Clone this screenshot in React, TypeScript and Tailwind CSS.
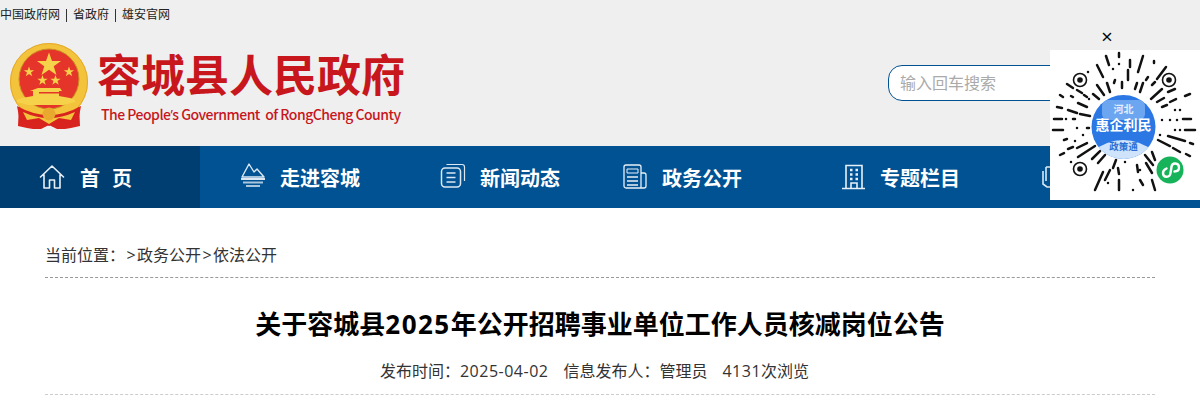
const navItems = [
  { label: '走进容城', width: 'w-[200px]', icon: 'mountain' },
  { label: '新闻动态', width: 'w-[182px]', icon: 'docs' },
  { label: '政务公开', width: 'w-[220px]', icon: 'news' },
  { label: '专题栏目', width: 'w-[200px]', icon: 'building' },
]

// sunburst strokes of the mini program code, x1 y1 x2 y2 in a 150 box
const qrRays = [
  [69, 3, 69, 7], [56, 6, 59, 15], [80, 10, 80, 17], [93, 6, 88, 22], [104, 11, 104, 13], [47, 15, 53, 27],
  [116, 17, 107, 29], [69, 14, 69, 14], [63, 19, 63, 19], [78, 20, 78, 30], [65, 30, 64, 33], [72, 32, 72, 38],
  [98, 27, 96, 30], [93, 33, 90, 42], [87, 33, 85, 39], [102, 35, 105, 32], [112, 39, 101, 49], [57, 33, 60, 42],
  [47, 35, 54, 45], [43, 44, 49, 49], [38, 22, 38, 22], [17, 34, 23, 38], [27, 40, 32, 43], [34, 45, 37, 47],
  [39, 49, 39, 49], [21, 46, 23, 47], [28, 53, 37, 57], [10, 45, 13, 47], [7, 57, 12, 58], [18, 60, 27, 63],
  [30, 64, 40, 66], [4, 69, 12, 69], [16, 69, 16, 69], [23, 69, 25, 69], [3, 80, 13, 80], [27, 78, 27, 78],
  [37, 78, 39, 78], [14, 90, 17, 89], [25, 91, 25, 91], [33, 85, 33, 85], [10, 105, 14, 103], [18, 99, 23, 97],
  [27, 98, 37, 93], [28, 107, 45, 96], [42, 109, 50, 101], [48, 113, 55, 105], [21, 112, 21, 112], [60, 120, 55, 130],
  [66, 110, 63, 118], [75, 112, 75, 112], [53, 122, 45, 140], [68, 118, 69, 124], [69, 130, 69, 140], [58, 133, 58, 133],
  [87, 115, 88, 122], [96, 113, 102, 123], [95, 105, 103, 115], [102, 102, 105, 110], [90, 130, 93, 135], [102, 130, 105, 140],
  [118, 86, 135, 91], [140, 93, 143, 94], [108, 90, 120, 96], [123, 98, 130, 102], [136, 104, 140, 106], [112, 70, 112, 70],
  [120, 70, 120, 70], [127, 70, 127, 70], [133, 69, 141, 69], [125, 80, 125, 80], [130, 80, 130, 80], [135, 80, 145, 80],
  [110, 85, 110, 85], [135, 46, 140, 44], [120, 52, 126, 49], [107, 52, 114, 48], [118, 42, 125, 39], [112, 57, 117, 55],
  [125, 60, 125, 60], [130, 60, 130, 60], [83, 140, 83, 140], [90, 120, 90, 120],
]

const qrEyes = [
  [30, 30],
  [119, 30],
  [30, 119],
]

function NavIcon({ name }: { name: string }) {
  if (name === 'home') {
    return (
      <svg viewBox="0 0 26 26" className="w-[26px] h-[26px]" fill="none" stroke="#e8f0f7" strokeWidth="1.6">
        <path d="M1.5 13 13 2l11.500 11M5 10.500V24h5.500v-8h5v8H21V10.500" strokeLinejoin="round" strokeLinecap="round" />
      </svg>
    )
  }
  if (name === 'mountain') {
    return (
      <svg viewBox="0 0 26 26" className="w-[26px] h-[26px] mb-[4px]" fill="none" stroke="#dbe8f3" strokeWidth="1.4">
        <path d="M2 15 9 2l5 8 3-3 7 8z" strokeLinejoin="round" />
        <path d="M1 17h24" strokeWidth="2" />
        <path d="M3 20.500h20M6 24h14" strokeWidth="2" stroke="#a9c6de" />
      </svg>
    )
  }
  if (name === 'docs') {
    return (
      <svg viewBox="0 0 26 26" className="w-[26px] h-[26px] mb-[2px]" fill="none" stroke="#dbe8f3" strokeWidth="1.5">
        <rect x="1.500" y="5" width="19" height="19" rx="3.500" />
        <path d="M6.500 1.500H22a2.500 2.500 0 0 1 2.500 2.500v14" strokeWidth="1.2" />
        <path d="M6.500 10h9M6.500 14.500h9M6.500 19h9" />
      </svg>
    )
  }
  if (name === 'news') {
    return (
      <svg viewBox="0 0 24 26" className="w-[26px] h-[26px]" fill="none" stroke="#e8f0f7" strokeWidth="1.3">
        <path d="M18 24H3a2 2 0 0 1-2-2V3a2 2 0 0 1 2-2h13a2 2 0 0 1 2 2zM18 9h3a2 2 0 0 1 2 2v11a2 2 0 0 1-2 2h-3" />
        <path d="M4 5h11v4H4z" strokeWidth="1" />
        <path d="M4 13h11M4 17h11M4 21h11" />
      </svg>
    )
  }
  if (name === 'building') {
    return (
      <svg viewBox="0 0 24 26" className="w-[24px] h-[26px]" fill="none" stroke="#e8f0f7" strokeWidth="1.6">
        <path d="M4 24V1.500h16V24M0 24.500h23" />
        <path d="M8 6h2.500M13.500 6H16M8 10.500h2.500M13.500 10.500H16M8 15h2.500M13.500 15H16" strokeWidth="2.4" />
        <path d="M9 24v-5h6v5" />
      </svg>
    )
  }
  return (
    <svg viewBox="0 0 12 28" className="w-[12px] h-[28px]" fill="none" stroke="#dbe8f3" strokeWidth="1.6">
      <path d="M4 4h8M4 4v14M1 8v13l4 3h7" />
    </svg>
  )
}

function Emblem() {
  return (
    <svg viewBox="0 0 80 86" className="w-[80px] h-[86px] shrink-0">
      <g transform="translate(0 3)">
        <path d="M10 59 9 80l9 2 12 2 10-5 10 5 12-2 9-2-1-21-12 9-18 4-18-4z" fill="#d8231f" />
        <circle cx="40" cy="36" r="39" fill="#f4c33c" />
        <circle cx="40" cy="36" r="38.500" fill="none" stroke="#e3a92c" strokeWidth="1" />
        <circle cx="40" cy="33" r="30" fill="#e5352a" stroke="#c98f22" strokeWidth="1" />
        <path d="M40 6.500l3 8.500h9l-7.300 5.300 2.800 8.700-7.500-5.300-7.500 5.300 2.800-8.700L28 15h9z" fill="#f6d24a" />
        <path d="M20 20.500l1.300 3.700h3.900l-3.200 2.300 1.200 3.800-3.200-2.300-3.200 2.300 1.200-3.800-3.200-2.300h3.900z" fill="#f6d24a" />
        <path d="M60 20.500l1.300 3.700h3.900l-3.200 2.300 1.200 3.800-3.200-2.300-3.200 2.300 1.200-3.800-3.200-2.300h3.900z" fill="#f6d24a" />
        <path d="M33.500 29l1.300 3.700h3.900l-3.200 2.300 1.200 3.800-3.200-2.300-3.200 2.300 1.200-3.800-3.200-2.300h3.900z" fill="#f6d24a" />
        <path d="M46.500 29l1.300 3.700h3.900l-3.200 2.300 1.200 3.800-3.200-2.300-3.200 2.300 1.200-3.800-3.200-2.300h3.900z" fill="#f6d24a" />
        <path d="M29 42h22l2 3h-3v5l11 2 5 2v2l-11 3H19L8 56v-2l5-2 11-2v-5h-3z" fill="#f6d24a" />
        <path d="M30 46h20v1.500H30z" fill="#e5352a" />
        <path d="M8 60q32 18 64 0l-3 16-17-2-12 6-12-6-17 2z" fill="#d8231f" />
        <path d="M14 66q26 12 52 0l-4 8-12-2-10 6-10-6-12 2z" fill="#f4c33c" />
        <circle cx="40" cy="68" r="6.500" fill="#e9a92e" />
      </g>
    </svg>
  )
}

function MiniCode() {
  return (
    <svg viewBox="0 0 150 150" className="w-[150px] h-[150px]">
      <g stroke="#111" strokeWidth="2.500" strokeLinecap="round">
        {qrRays.map((r, i) => (
          <line key={i} x1={r[0]} y1={r[1]} x2={r[2]} y2={r[3] + 0.01} />
        ))}
      </g>
      {qrEyes.map((e, i) => (
        <g key={i}>
          <circle cx={e[0]} cy={e[1]} r="6.500" fill="none" stroke="#111" strokeWidth="1.600" />
          <circle cx={e[0]} cy={e[1]} r="2.800" fill="#111" />
        </g>
      ))}
      <defs>
        <clipPath id="badgeClip">
          <circle cx="73.500" cy="77" r="32" />
        </clipPath>
      </defs>
      <circle cx="73.500" cy="77" r="32" fill="#2b78e4" />
      <rect x="52" y="50" width="43" height="20" rx="6" fill="#6da6f0" />
      <path d="M40 103q33-26 67 0v10H40z" fill="#cfe4fa" clipPath="url(#badgeClip)" />
      <text x="73.500" y="63" textAnchor="middle" fontSize="10" fontWeight="700" fill="#e3eefc" fontFamily="'Noto Sans CJK SC', sans-serif">河北</text>
      <text x="73.500" y="80" textAnchor="middle" fontSize="14" fontWeight="700" fill="#fff" fontFamily="'Noto Sans CJK SC', sans-serif">惠企利民</text>
      <text x="73.500" y="100" textAnchor="middle" fontSize="9.500" fontWeight="700" fill="#2b6fd6" fontFamily="'Noto Sans CJK SC', sans-serif">政策通</text>
      <circle cx="120" cy="120" r="13.500" fill="#16b35a" />
      <path d="M113 123c0 5 7 5 7.500 0l1-6c.5-5 7.500-4.500 7.500.5 0 3-2.500 4-4.500 4M116.500 118.500c-2.500 1-3.500 2.500-3.500 4.500" fill="none" stroke="#fff" strokeWidth="2.400" strokeLinecap="round" />
    </svg>
  )
}

export default function App() {
  return (
    <div className="relative h-[400px] w-[1200px] overflow-hidden bg-white text-[#333] font-['Open_Sans','Noto_Sans_CJK_SC',sans-serif]">
      <header className="h-[146px] bg-[#efefef]">
        <div className="flex h-[30px] items-center text-[12px] text-[#222]">
          <a>中国政府网</a>
          <span className="mx-[6px] h-[13px] w-px bg-[#333]"></span>
          <a>省政府</a>
          <span className="mx-[6px] h-[13px] w-px bg-[#333]"></span>
          <a>雄安官网</a>
        </div>

        <div className="flex pl-[9px] pt-[13px]">
          <Emblem />
          <div className="ml-[8px] mt-[4px] font-['Noto_Sans_CJK_SC',sans-serif] text-[#c8161d]">
            <div className="h-[52px] text-[44px] leading-[52px] font-bold whitespace-nowrap">容城县人民政府</div>
            <div className="mt-[5px] pl-[4px] text-[14px] leading-[20px] font-medium tracking-[-0.5px] whitespace-pre">The People<span className="font-['Open_Sans']">’</span>s Government  of RongCheng County</div>
          </div>
          <input
            placeholder="输入回车搜索"
            className="ml-[483px] mt-[22px] h-[36px] w-[200px] shrink-0 rounded-l-[14px] border border-[#005293] bg-white pl-[11px] text-[16px] outline-none placeholder:text-[#aaa]"
          />
        </div>
      </header>

      <nav className="flex h-[62px] bg-[#005293] text-[20px] font-bold text-white font-['Noto_Sans_CJK_SC',sans-serif]">
        <div className="flex w-[200px] shrink-0 items-center bg-[#003d70] pl-[39px]">
          <NavIcon name="home" />
          <span className="ml-[15px] mt-[2px] flex gap-[12px]">
            <span>首</span>
            <span>页</span>
          </span>
        </div>
        {navItems.map((item) => (
          <div key={item.label} className={`flex shrink-0 items-center pl-[40px] ${item.width}`}>
            <NavIcon name={item.icon} />
            <span className="ml-[14px] mt-[2px]">{item.label}</span>
          </div>
        ))}
        <div className="flex shrink-0 items-center pl-[40px]">
          <NavIcon name="other" />
        </div>
      </nav>

      <main className="px-[45px]">
        <div className="flex h-[70px] items-end border-b border-dashed border-[#999] pb-[10px] text-[16px] leading-[24px]">
          当前位置：
          <span className="w-[12px] text-center">&gt;</span>
          政务公开
          <span className="w-[12px] text-center">&gt;</span>
          依法公开
        </div>
        <h1 className="mt-[27px] text-center text-[26px] leading-[38px] font-bold text-black">
          关于容城县<span className="tracking-[1.5px]">2025</span>年公开招聘事业单位工作人员核减岗位公告
        </h1>
        <div className="mt-[16px] flex h-[36px] items-start justify-center gap-[15px] border-b border-dashed border-[#ccc] pr-[11px] text-[16px] leading-[24px]">
          <span>发布时间：<span className="tracking-[0.5px]">2025-04-02</span></span>
          <span>信息发布人：管理员</span>
          <span><span className="tracking-[0.5px]">4131</span>次浏览</span>
        </div>
      </main>

      <div className="absolute right-0 top-[25px] w-[150px]">
        <div className="flex h-[25px] justify-center pr-[36px] text-[20px] leading-[24px] text-black">×</div>
        <div className="bg-white">
          <MiniCode />
        </div>
      </div>
    </div>
  )
}
